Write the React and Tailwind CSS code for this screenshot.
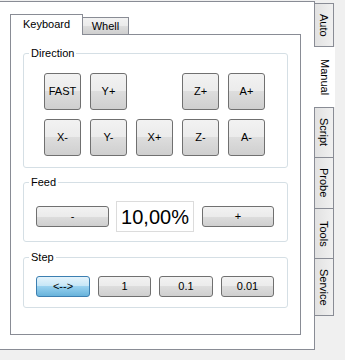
const btn =
    'flex items-center justify-center border border-[#707070] rounded-[3px] bg-[linear-gradient(#f2f2f2_0%,#ebebeb_50%,#dddddd_50%,#cfcfcf_100%)] text-black'
const btnActive =
    'flex items-center justify-center border border-[#3c7fb1] rounded-[3px] bg-[linear-gradient(#e5f4fc_0%,#c4e5f6_50%,#98d1ef_50%,#68b3db_100%)] text-black'
const sideTab =
    'w-[20px] flex items-center justify-center border-[#898c95] bg-[linear-gradient(90deg,#e2e2e2,#f0f0f0)] [writing-mode:vertical-rl]'

function Group({ title, children, className }) {
    return (
        <fieldset className={`border border-[#d5dfe5] rounded-[3px] ${className || ''}`}>
            <legend className="ml-[5px] px-[2px] leading-[12px]">{title}</legend>
            {children}
        </fieldset>
    )
}

export default function App() {
    return (
        <div className="w-[345px] h-[360px] bg-[#f0f0f0] pt-px flex items-start font-['Liberation_Sans',Tahoma,sans-serif] text-[11px] text-black">
            <div className="w-[315px] h-[349px] shrink-0 bg-white border-t border-r border-b border-[#898c95] pt-[12px] pl-[10px]">
                <div className="flex items-end">
                    <div className="relative z-10 -mb-px w-[73px] h-[21px] bg-white border border-b-0 border-[#898c95] flex items-center justify-center pb-[2px]">
                        Keyboard
                    </div>
                    <div className="w-[46px] h-[17px] border-t border-r border-[#898c95] bg-[linear-gradient(#f2f2f2_0%,#ebebeb_50%,#dddddd_50%,#cfcfcf_100%)] flex items-center justify-center">
                        Whell
                    </div>
                </div>
                <div className="w-[291px] h-[301px] border border-[#898c95] pt-[12px] px-[12px]">
                    <Group title="Direction">
                        <div className="grid grid-cols-[repeat(5,37px)] auto-rows-[37px] gap-[9px] pl-[20px] pt-[14px] pb-[11px]">
                            <div className={btn}>FAST</div>
                            <div className={btn}>Y+</div>
                            <div />
                            <div className={btn}>Z+</div>
                            <div className={btn}>A+</div>
                            <div className={btn}>X-</div>
                            <div className={btn}>Y-</div>
                            <div className={btn}>X+</div>
                            <div className={btn}>Z-</div>
                            <div className={btn}>A-</div>
                        </div>
                    </Group>
                    <Group title="Feed" className="mt-[8px]">
                        <div className="flex items-center pl-[12px] pt-[13px] pb-[9px]">
                            <div className={`${btn} w-[73px] h-[21px]`}>-</div>
                            <div className="ml-[7px] w-[78px] h-[31px] border border-[#dcdcdc] bg-white flex items-center justify-center text-[20px]">
                                10,00%
                            </div>
                            <div className={`${btn} ml-[8px] w-[72px] h-[21px]`}>+</div>
                        </div>
                    </Group>
                    <Group title="Step" className="mt-[9px]">
                        <div className="flex items-center gap-[8px] pl-[12px] pt-[13px] pb-[10px]">
                            <div className={`${btnActive} w-[54px] h-[21px]`}>&lt;--&gt;</div>
                            <div className={`${btn} w-[53px] h-[21px]`}>1</div>
                            <div className={`${btn} w-[54px] h-[21px]`}>0.1</div>
                            <div className={`${btn} w-[53px] h-[21px]`}>0.01</div>
                        </div>
                    </Group>
                </div>
            </div>
            <div className="-ml-px mt-[2px] flex flex-col">
                <div className={`${sideTab} h-[44px] border`}>Auto</div>
                <div className="w-[21px] h-[60px] bg-white flex items-center justify-center [writing-mode:vertical-rl]">
                    Manual
                </div>
                <div className={`${sideTab} h-[51px] border`}>Script</div>
                <div className={`${sideTab} h-[51px] border border-t-0`}>Probe</div>
                <div className={`${sideTab} h-[50px] border border-t-0`}>Tools</div>
                <div className={`${sideTab} h-[57px] border border-t-0`}>Service</div>
            </div>
        </div>
    )
}
